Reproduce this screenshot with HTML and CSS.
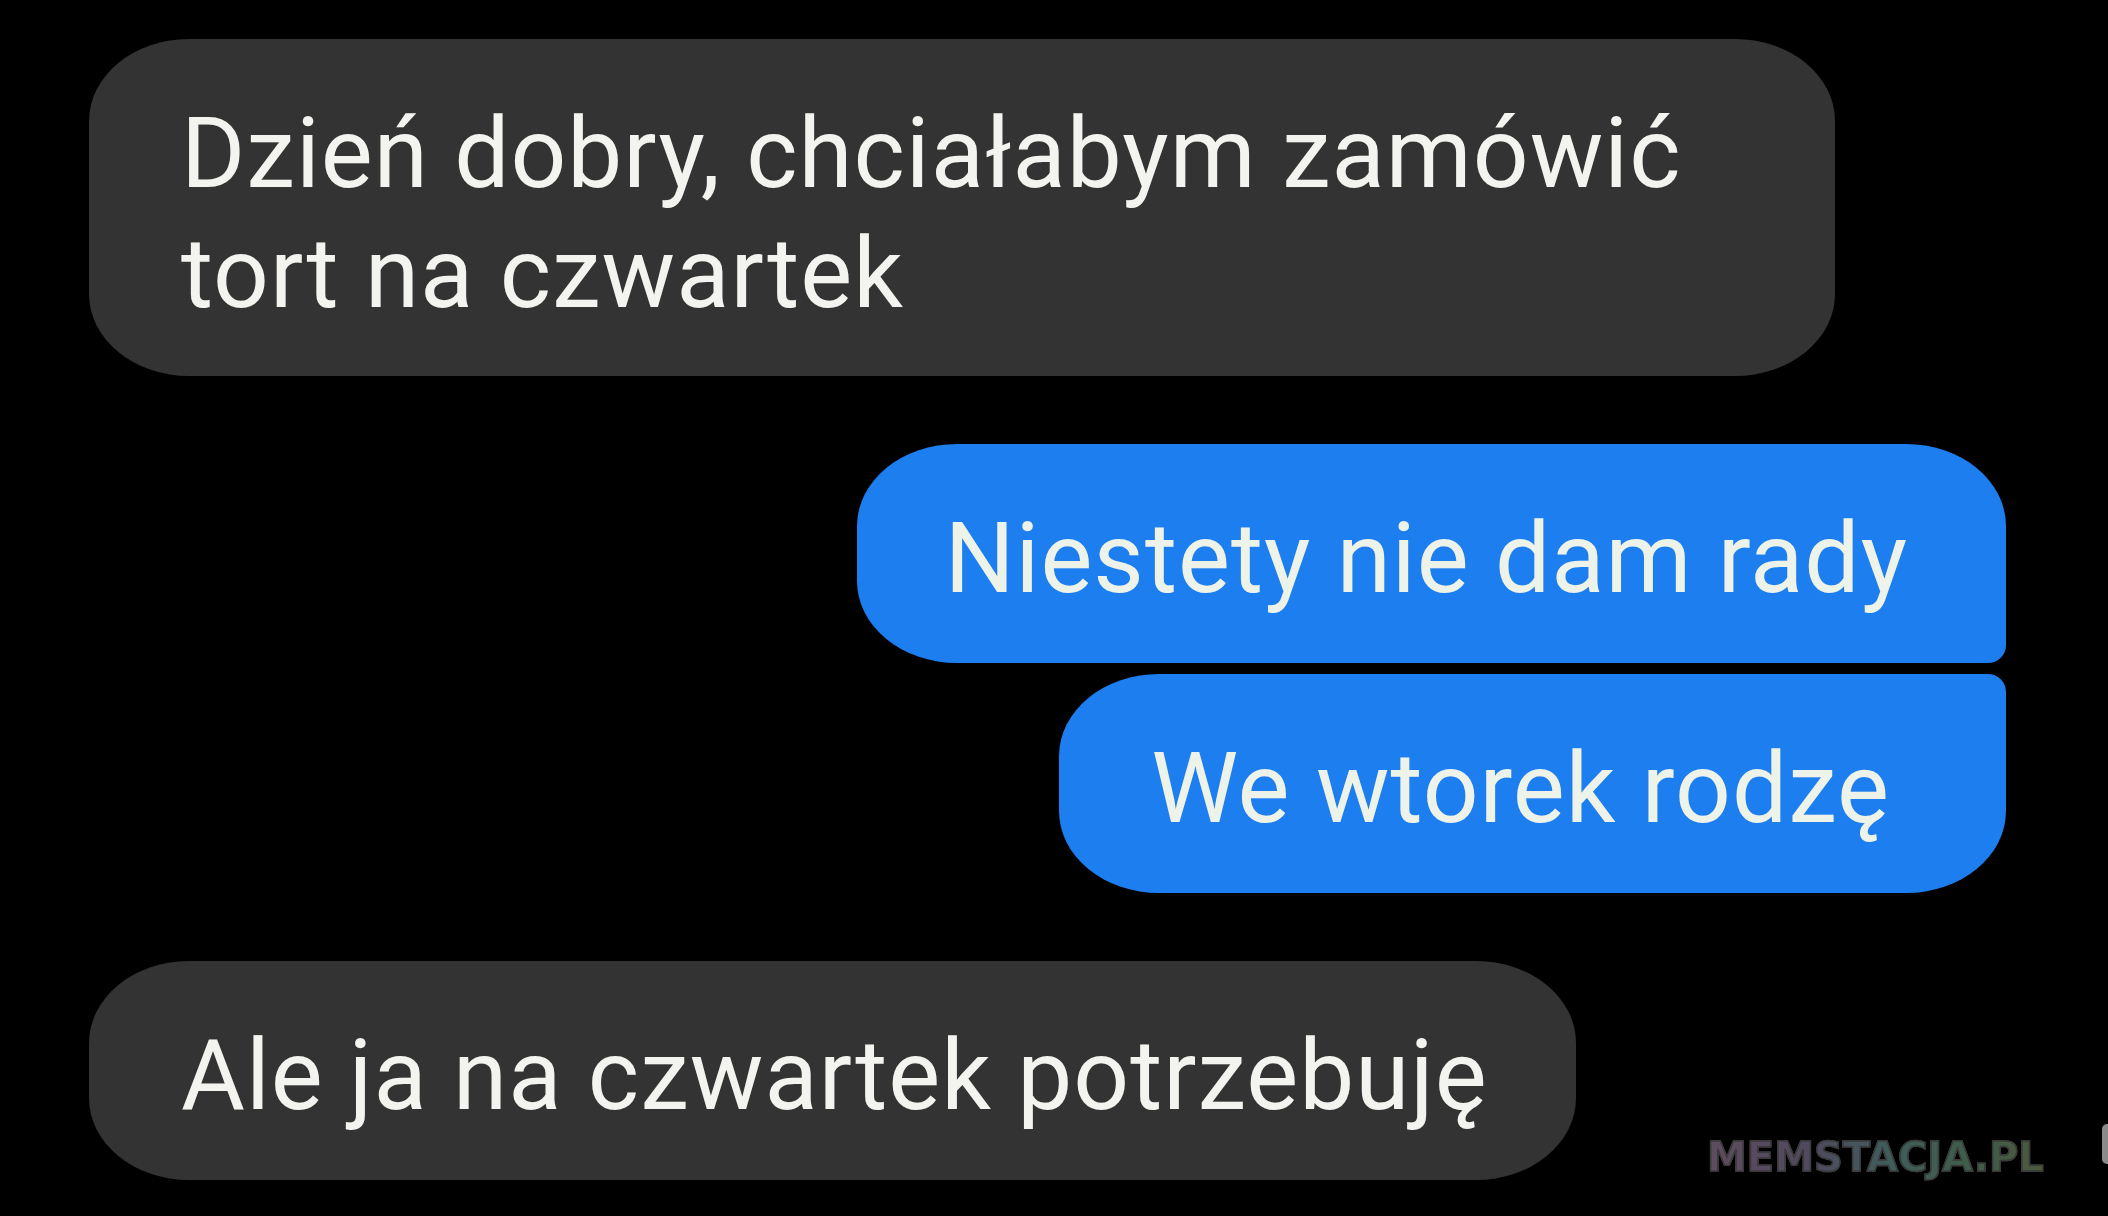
FILE: index.html
```html
<!DOCTYPE html>
<html lang="pl">
<head>
    <meta charset="UTF-8">
    <title>Tort na czwartek</title>
    <link rel="stylesheet" href="styles.css">
</head>
<body>
    <div class="chat">
        <div class="msg msg-in msg-wide">Dzień dobry, chciałabym zamówić tort na czwartek</div>
        <div class="msg msg-out msg-first">Niestety nie dam rady</div>
        <div class="msg msg-out msg-last">We wtorek rodzę</div>
        <div class="msg msg-in msg-short">Ale ja na czwartek potrzebuję</div>
    </div>

    <div class="watermark">MEMSTACJA.PL</div>
    <div class="edge-mark"></div>
</body>
</html>
```

FILE: styles.css
```css
html, body {
    margin: 0;
    background: #000;
}

body {
    width: 2108px;
    height: 1216px;
    overflow: hidden;
    position: relative;
    font-family: Roboto, "Liberation Sans", sans-serif;
}

.chat {
    display: flex;
    flex-direction: column;
    padding: 39px 102px 0 89px;
}

.msg {
    font-size: 98px;
    line-height: 120px;
    letter-spacing: 1px;
    color: #f3f3ef;
    padding: 55px 98px 44px 92px;
    border-radius: 100px / 82px;
    box-sizing: border-box;
}

.msg-in {
    align-self: flex-start;
    background: #333333;
    margin-bottom: 68px;
}

.msg-wide {
    width: 1746px;
    padding-bottom: 42px;
}

.msg-short {
    padding-right: 88px;
}

.msg-out {
    align-self: flex-end;
    background: #1c7eef;
    color: #eef3ea;
}

.msg-first {
    padding-left: 88px;
    border-top-right-radius: 100px 82px;
    border-bottom-right-radius: 18px;
    margin-bottom: 11px;
}

.msg-last {
    border-top-right-radius: 18px;
    padding-right: 116px;
    margin-bottom: 68px;
}

.watermark {
    position: absolute;
    left: 1707px;
    top: 1134px;
    font-family: "DejaVu Sans", sans-serif;
    font-weight: bold;
    font-size: 40px;
    letter-spacing: 0;
    background: linear-gradient(90deg, #6f5a6e 0%, #5f5670 30%, #4a6e6a 55%, #4a6e56 80%, #5a6846 100%);
    -webkit-background-clip: text;
    background-clip: text;
    color: transparent;
    -webkit-text-stroke: 1.5px #454545;
    opacity: 0.85;
}

.edge-mark {
    position: absolute;
    left: 2102px;
    top: 1124px;
    width: 10px;
    height: 40px;
    border-radius: 6px;
    background: #8a8a8a;
}
```
